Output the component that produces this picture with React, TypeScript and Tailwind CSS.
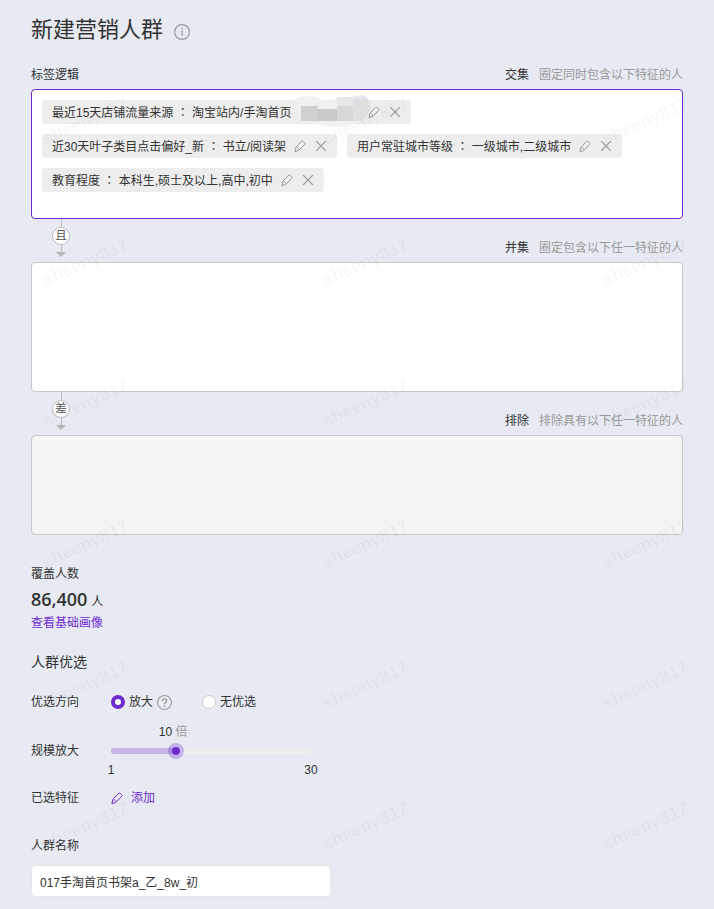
import { useState } from "react";
import type { ReactNode } from "react";

const chips = [
  { name: "最近15天店铺流量来源", value: "淘宝站内/手淘首页", masked: true },
  { name: "近30天叶子类目点击偏好_新", value: "书立/阅读架" },
  { name: "用户常驻城市等级", value: "一级城市,二级城市" },
  { name: "教育程度", value: "本科生,硕士及以上,高中,初中" },
];

const MIN = 1;
const MAX = 30;

const PencilIcon = () => (
  <svg
    className="size-3"
    viewBox="0 0 12 12"
    fill="none"
    stroke="currentColor"
    strokeLinejoin="round"
    strokeLinecap="round"
  >
    <path d="M1 11.3 1.9 7.3 7.2 1.6Q8.3.6 9.5 1.6L10.4 2.4Q11.4 3.4 10.5 4.5L5 10.2Z" />
    <path d="M3 7.4 5 9.3" />
  </svg>
);

const CloseIcon = () => (
  <svg className="size-[14px]" viewBox="0 0 14 14" fill="none" stroke="currentColor" strokeWidth="1.2">
    <path d="M2.2 2.2 11.8 11.8M11.8 2.2 2.2 11.8" />
  </svg>
);

const InfoIcon = () => (
  <svg className="mt-1 size-4 text-[#999]" viewBox="0 0 16 16" fill="none" stroke="currentColor">
    <circle cx="8" cy="8" r="7.4" strokeWidth="1.2" />
    <path d="M8 6.6V11.8" strokeWidth="1.2" />
    <circle cx="8" cy="4.6" r="0.8" fill="currentColor" stroke="none" />
  </svg>
);

const HelpIcon = () => (
  <svg className="size-[15px] text-[#999]" viewBox="0 0 14 14" fill="none" stroke="currentColor">
    <circle cx="7" cy="7" r="6.5" />
    <path d="M5 5.6C5 4.3 5.8 3.7 7 3.7S9 4.4 9 5.4C9 6.7 7 6.7 7 8.4" strokeWidth="1.2" />
    <circle cx="7" cy="10.2" r="0.8" fill="currentColor" stroke="none" />
  </svg>
);

const Mosaic = () => (
  <svg
    className="relative -my-2 h-9 w-[61px] overflow-visible"
    viewBox="0 0 61 36"
    aria-hidden="true"
  >
    <path d="M-5 5Q8 -1 25 6L48 4Q57 -1 66 5L72 12 66 26Q40 38 18 30Q-4 28 -5 5Z" fill="#f1f1f1" />
    <circle cx="62" cy="10" r="9" fill="#e6e6f0" />
    <path d="M2 12h17v15H2z" fill="#d1cfcf" />
    <path d="M19 15h19v12H19z" fill="#c9c9c9" />
    <path d="M38 12h16v15H38z" fill="#d6d7d9" />
    <path d="M38 3h16v9H38z" fill="#e7e7ea" />
    <path d="M54 5h13l6 9-6 9-4 4H54z" fill="#dfdfe1" />
  </svg>
);

const RuleHead = ({ title, hint }: { title: string; hint: string }) => (
  <p className="ml-auto flex gap-[10px]">
    <span>{title}</span>
    <span className="text-[#999]">{hint}</span>
  </p>
);

const Connector = ({ label, children }: { label: string; children: ReactNode }) => (
  <div className="flex h-[43px] items-end pb-[5px]">
    <div className="ml-[21px] flex h-[38px] w-[18px] flex-col items-center">
      <div className="h-2 w-px shrink-0 bg-[#bbb]" />
      <span className="flex size-[18px] shrink-0 items-center justify-center rounded-full border border-[#bbb] bg-white leading-[18px] text-[#555]">
        {label}
      </span>
      <div className="h-[7px] w-px shrink-0 bg-[#bbb]" />
      <svg className="h-[5px] w-[10px] shrink-0" viewBox="0 0 10 5">
        <path d="M0 0h10L5 5z" fill="#b5b5b5" />
      </svg>
    </div>
    {children}
  </div>
);

const Radio = ({
  label,
  checked,
  onChange,
}: {
  label: string;
  checked: boolean;
  onChange: () => void;
}) => (
  <label className="flex cursor-pointer items-center gap-1">
    <input
      type="radio"
      name="direction"
      checked={checked}
      onChange={onChange}
      className="size-[14px] appearance-none rounded-full border border-[#ccc] bg-white checked:border-4 checked:border-[#6e2bd0]"
    />
    {label}
  </label>
);

const Watermark = () => (
  <div className="pointer-events-none absolute inset-0 overflow-hidden" aria-hidden="true">
    <div className="-mt-[91px] -ml-[55px] grid grid-cols-[repeat(3,280px)] auto-rows-[141px]">
      {Array.from({ length: 21 }, (_, i) => (
        <span
          key={i}
          className="flex -rotate-[24deg] items-center justify-center text-lg font-bold text-black/[0.035]"
        >
          sheeny817
        </span>
      ))}
    </div>
  </div>
);

export default function App() {
  const [direction, setDirection] = useState("expand");
  const [scale, setScale] = useState(10);
  const [name, setName] = useState("017手淘首页书架a_乙_8w_初");
  const percent = ((scale - MIN) / (MAX - MIN)) * 100;

  return (
    <main className="relative min-h-screen bg-[#e7eaf2] px-[31px] pt-[14px] pb-[11px] font-['Liberation_Sans','Noto_Sans_CJK_SC',sans-serif] text-xs leading-[18px] text-[#333]">
      <div className="flex items-center gap-[11px]">
        <h1 className="text-[22px] leading-8">新建营销人群</h1>
        <InfoIcon />
      </div>

      <section>
        <div className="mt-5 flex pb-[5px]">
          <h2>标签逻辑</h2>
          <RuleHead title="交集" hint="圈定同时包含以下特征的人" />
        </div>
        <ul className="flex min-h-[130px] flex-wrap content-start gap-[10px] rounded border border-[#6e2bd0] bg-white p-[10px]">
          {chips.map((chip) => (
            <li
              key={chip.name}
              className="flex h-6 items-center gap-2 rounded bg-[#ededed] pr-[9px] pl-[10px]"
            >
              <span className="whitespace-nowrap">
                {chip.name}{" "}
                <span className="font-['Noto_Sans_CJK_TC',sans-serif]" lang="zh-TW">
                  ：
                </span>{" "}
                {chip.value}
              </span>
              {chip.masked && <Mosaic />}
              <button type="button" aria-label="编辑" className="cursor-pointer text-[#999]">
                <PencilIcon />
              </button>
              <button type="button" aria-label="删除" className="cursor-pointer text-[#999]">
                <CloseIcon />
              </button>
            </li>
          ))}
        </ul>

        <Connector label="且">
          <RuleHead title="并集" hint="圈定包含以下任一特征的人" />
        </Connector>
        <div className="h-[130px] rounded border border-[#c8c8c8] bg-white" />

        <Connector label="差">
          <RuleHead title="排除" hint="排除具有以下任一特征的人" />
        </Connector>
        <div className="h-[100px] rounded border border-[#c8c8c8] bg-[#f4f4f4]" />
      </section>

      <section className="mt-[30px]">
        <h2>覆盖人数</h2>
        <p className="mt-1 flex h-[26px] items-baseline gap-1">
          <strong className="font-['Open_Sans',sans-serif] text-lg leading-6 font-semibold">
            86,400
          </strong>
          人
        </p>
        <a href="#portrait" className="mt-px block w-fit text-[#6e2bd0]">
          查看基础画像
        </a>
      </section>

      <section className="mt-5">
        <h2 className="text-sm leading-5">人群优选</h2>

        <div className="mt-[21px] flex items-center">
          <span className="w-20">优选方向</span>
          <div className="flex items-center gap-1">
            <Radio
              label="放大"
              checked={direction === "expand"}
              onChange={() => setDirection("expand")}
            />
            <HelpIcon />
          </div>
          <div className="ml-[30px]">
            <Radio
              label="无优选"
              checked={direction === "none"}
              onChange={() => setDirection("none")}
            />
          </div>
        </div>

        <div className="mt-3 flex items-center">
          <label htmlFor="scale" className="w-20">
            规模放大
          </label>
          <div className="w-[200px]">
            <output
              htmlFor="scale"
              className="block w-fit -translate-x-1/2"
              style={{ marginLeft: `${percent}%` }}
            >
              {scale} <span className="text-[#999]">倍</span>
            </output>
            <div className="mt-[2px] flex h-4 items-center">
              <input
                id="scale"
                type="range"
                min={MIN}
                max={MAX}
                value={scale}
                onChange={(e) => setScale(Number(e.target.value))}
                className="h-[6px] w-full cursor-pointer appearance-none rounded-full bg-[#efefef] [&::-webkit-slider-thumb]:size-4 [&::-webkit-slider-thumb]:appearance-none [&::-webkit-slider-thumb]:rounded-full [&::-webkit-slider-thumb]:border-4 [&::-webkit-slider-thumb]:border-[#6e2bd0]/30 [&::-webkit-slider-thumb]:bg-[#6e2bd0] [&::-webkit-slider-thumb]:bg-clip-padding"
                style={{
                  backgroundImage: `linear-gradient(to right, #c6b3e8 ${percent}%, transparent ${percent}%)`,
                }}
              />
            </div>
            <div className="-mx-[7px] mt-[2px] flex justify-between text-center">
              <span className="w-[14px]">{MIN}</span>
              <span className="w-[14px]">{MAX}</span>
            </div>
          </div>
        </div>

        <div className="mt-[10px] flex items-center">
          <span className="w-20">已选特征</span>
          <button type="button" className="flex cursor-pointer items-center gap-2 text-[#6e2bd0]">
            <PencilIcon />
            添加
          </button>
        </div>
      </section>

      <section className="mt-[30px]">
        <label htmlFor="name" className="block">
          人群名称
        </label>
        <input
          id="name"
          type="text"
          value={name}
          onChange={(e) => setName(e.target.value)}
          className="mt-[10px] block h-8 w-[300px] rounded border border-[#e5e5e5] bg-white px-2"
        />
      </section>

      <Watermark />
    </main>
  );
}
